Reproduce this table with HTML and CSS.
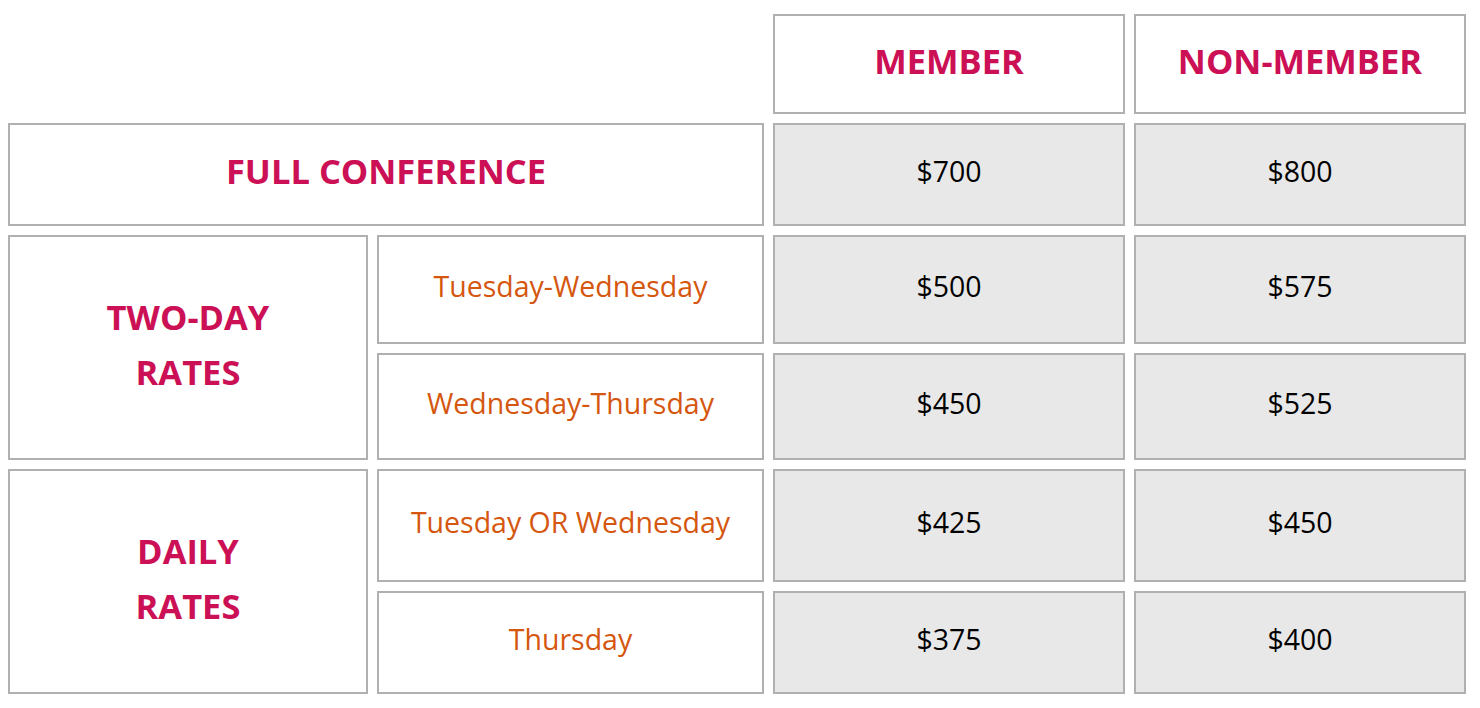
FILE: index.html
```html
<!DOCTYPE html>
<html>
<head>
<meta charset="utf-8">
<link rel="stylesheet" href="styles.css">
</head>
<body>
<div class="rates">
  <div class="cell head c3 r1">MEMBER</div>
  <div class="cell head c4 r1">NON-MEMBER</div>

  <div class="cell head span12 r2">FULL CONFERENCE</div>
  <div class="cell price c3 r2">$700</div>
  <div class="cell price c4 r2">$800</div>

  <div class="cell head c1 r34">TWO-DAY<br>RATES</div>
  <div class="cell day c2 r3">Tuesday-Wednesday</div>
  <div class="cell price c3 r3">$500</div>
  <div class="cell price c4 r3">$575</div>
  <div class="cell day c2 r4">Wednesday-Thursday</div>
  <div class="cell price c3 r4">$450</div>
  <div class="cell price c4 r4">$525</div>

  <div class="cell head c1 r56">DAILY<br>RATES</div>
  <div class="cell day c2 r5">Tuesday OR Wednesday</div>
  <div class="cell price c3 r5">$425</div>
  <div class="cell price c4 r5">$450</div>
  <div class="cell day c2 r6">Thursday</div>
  <div class="cell price c3 r6">$375</div>
  <div class="cell price c4 r6">$400</div>
</div>
</body>
</html>
```
FILE: styles.css
```css
html, body {
  margin: 0;
  background: #ffffff;
}
body {
  padding: 14px 0 0 8px;
  font-family: "Open Sans", "Noto Sans", sans-serif;
}
.rates {
  display: grid;
  grid-template-columns: 360px 387px 352px 332px;
  grid-template-rows: 100px 103px 109px 107px 113px 103px;
  gap: 9px;
  width: 1458px;
}
.cell {
  box-sizing: border-box;
  border: 2px solid #b0b0b0;
  padding-bottom: 8px;
  display: flex;
  align-items: center;
  justify-content: center;
  text-align: center;
}
.head {
  color: #cc1055;
  font-weight: 700;
  font-size: 34.5px;
  line-height: 55px;
}
.day {
  color: #d5570f;
  font-size: 28.5px;
  background: #ffffff;
}
.price {
  color: #000000;
  font-size: 28.5px;
  background: #e8e8e8;
}
.c1 { grid-column: 1; }
.c2 { grid-column: 2; }
.c3 { grid-column: 3; }
.c4 { grid-column: 4; }
.span12 { grid-column: 1 / 3; }
.r1 { grid-row: 1; }
.r2 { grid-row: 2; }
.r3 { grid-row: 3; }
.r4 { grid-row: 4; }
.r5 { grid-row: 5; }
.r6 { grid-row: 6; }
.r34 { grid-row: 3 / 5; }
.r56 { grid-row: 5 / 7; }
```
